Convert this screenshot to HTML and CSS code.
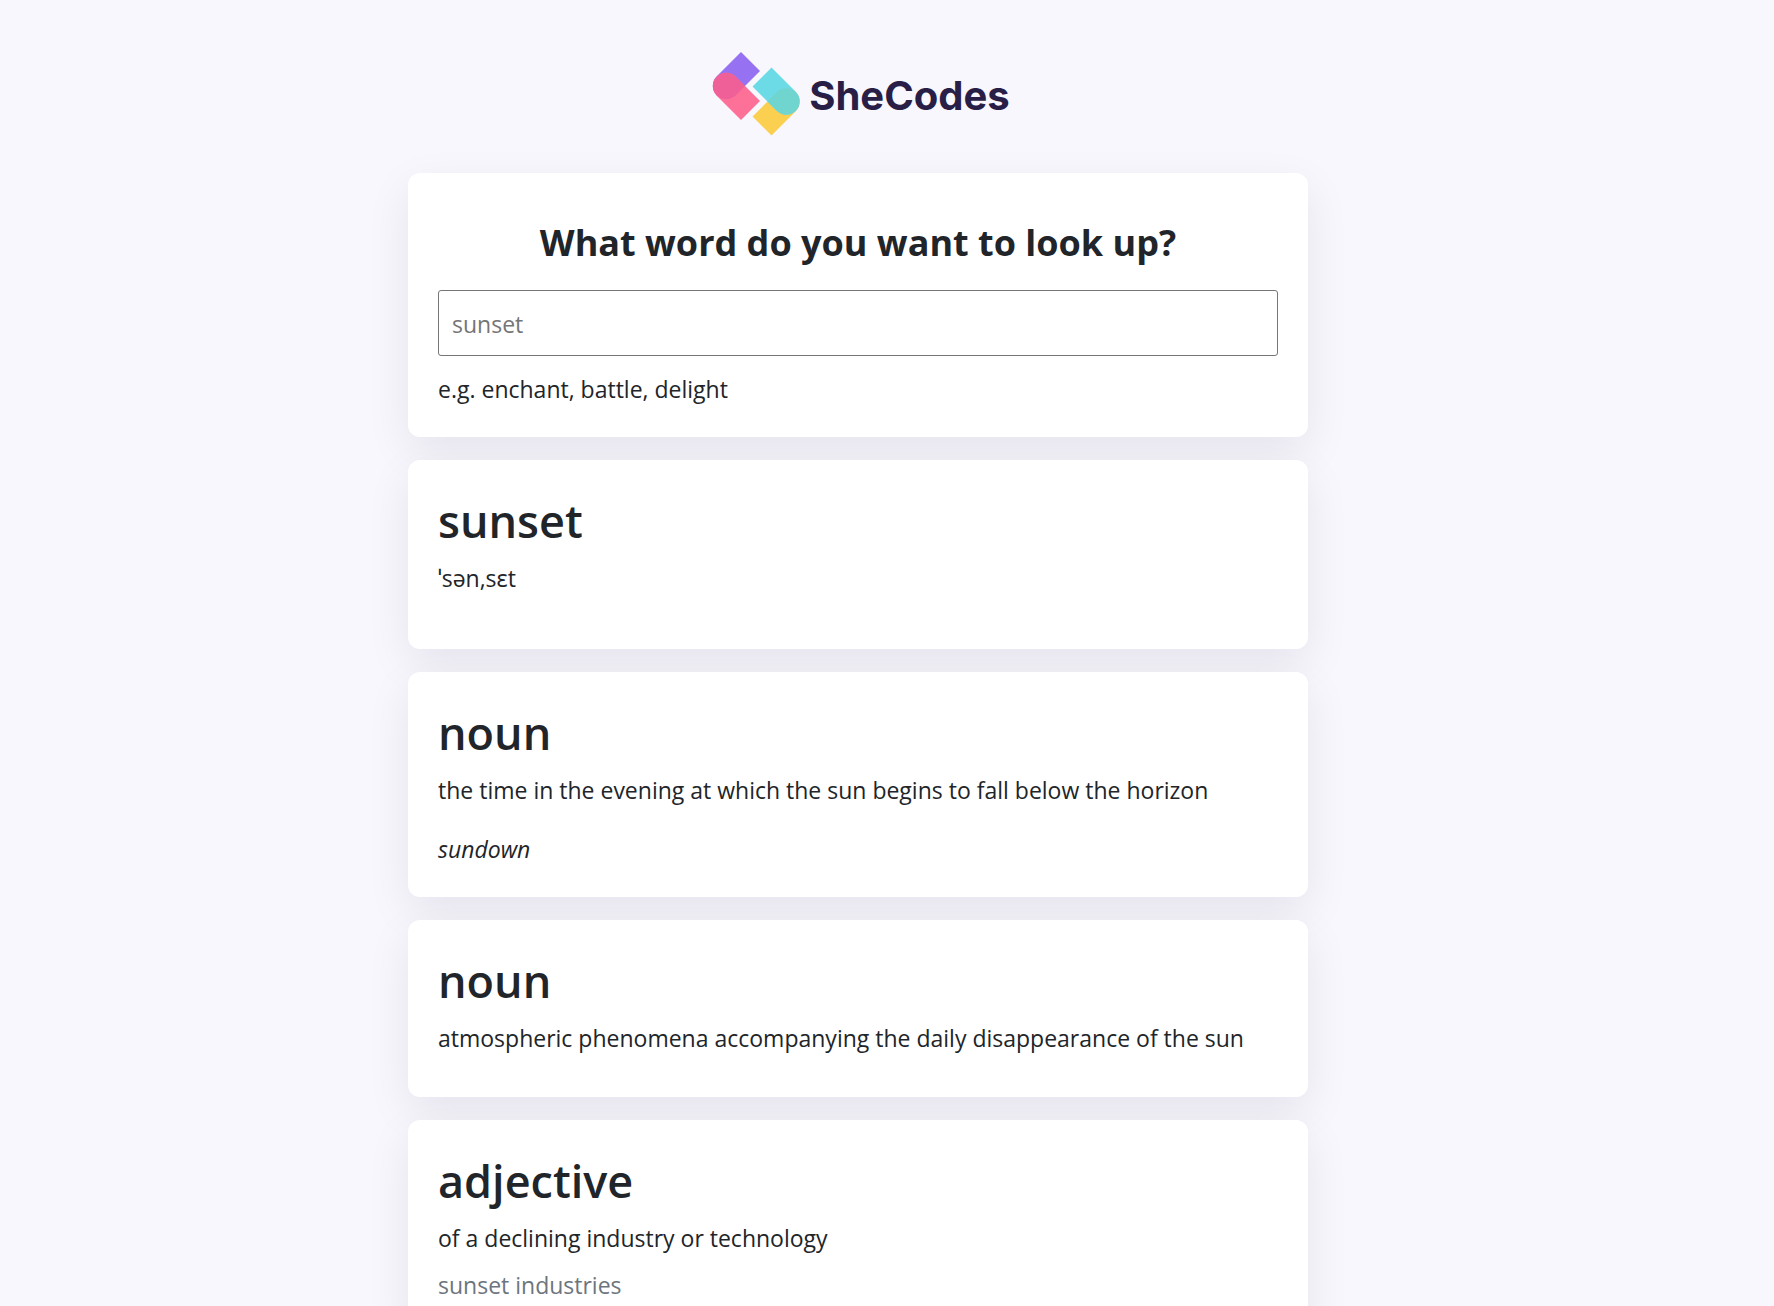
FILE: index.html
```html
<!DOCTYPE html>
<html lang="en">
<head>
  <meta charset="utf-8">
  <meta name="viewport" content="width=device-width, initial-scale=1">
  <title>Dictionary - SheCodes</title>
  <link rel="stylesheet" href="styles.css">
</head>
<body>
  <div class="container">
    <header class="logo">
      <svg class="logo-mark" viewBox="0 0 88 84" aria-hidden="true">
        <defs>
          <clipPath id="clip-pink"><path d="M48 49 29 68 4.500 43.500A13.440 13.440 0 0 1 23.500 24.500Z"/></clipPath>
          <clipPath id="clip-cyan"><path d="M59.500 15.500 40.500 34.500 65 59A13.440 13.440 0 0 0 84 40Z"/></clipPath>
        </defs>
        <path fill="#9672f2" d="M29 0 48 19 23.500 43.500A13.440 13.440 0 0 1 4.500 24.500Z"/>
        <path fill="#fd7199" d="M48 49 29 68 4.500 43.500A13.440 13.440 0 0 1 23.500 24.500Z"/>
        <path fill="#ef5f98" clip-path="url(#clip-pink)" d="M29 0 48 19 23.500 43.500A13.440 13.440 0 0 1 4.500 24.500Z"/>
        <path fill="#fbcf50" d="M40.500 64.500 59.500 83.500 84 59A13.440 13.440 0 0 0 65 40Z"/>
        <path fill="#6cdbe6" d="M59.500 15.500 40.500 34.500 65 59A13.440 13.440 0 0 0 84 40Z"/>
        <path fill="#70d5cf" clip-path="url(#clip-cyan)" d="M40.500 64.500 59.500 83.500 84 59A13.440 13.440 0 0 0 65 40Z"/>
      </svg>
      <span class="logo-name">SheCodes</span>
    </header>
    <main class="dictionary">
      <section class="card search">
        <form>
          <h1 class="question"><label for="keyword">What word do you want to look up?</label></h1>
          <input class="search-input" id="keyword" type="search" placeholder="sunset">
        </form>
        <p class="hint">e.g. enchant, battle, delight</p>
      </section>
      <section class="card word">
        <h2 class="title">sunset</h2>
        <p class="phonetic">ˈsən,sɛt</p>
      </section>
      <section class="card">
        <h2 class="title">noun</h2>
        <p class="definition">the time in the evening at which the sun begins to fall below the horizon</p>
        <ul class="synonyms">
          <li>sundown</li>
        </ul>
      </section>
      <section class="card">
        <h2 class="title">noun</h2>
        <p class="definition">atmospheric phenomena accompanying the daily disappearance of the sun</p>
      </section>
      <section class="card">
        <h2 class="title">adjective</h2>
        <p class="definition">of a declining industry or technology</p>
        <p class="example">sunset industries</p>
      </section>
    </main>
  </div>
</body>
</html>
```
FILE: styles.css
```css
* {
  box-sizing: border-box;
}

body {
  margin: 0;
  padding: 0 58px 0 0;
  background: #f8f7fe;
  color: #212529;
  font-family: "Segoe UI", "Open Sans", "Noto Sans", sans-serif;
  font-size: 23px;
  line-height: 36px;
}

h1, h2, p, ul {
  margin: 0;
}

.container {
  max-width: 900px;
  margin: 0 auto;
}

.logo {
  display: flex;
  justify-content: center;
  align-items: center;
  gap: 9px;
  padding: 52px 0 37px 6px;
}

.logo-mark {
  width: 88px;
  height: 84px;
}

.logo-name {
  padding-top: 3px;
  color: #281e46;
  font-family: Inter, sans-serif;
  font-size: 40px;
  font-weight: 700;
  line-height: 48px;
}

.dictionary {
  display: flex;
  flex-direction: column;
  gap: 23px;
}

.card {
  padding: 30px;
  border-radius: 12px;
  background: #fff;
  box-shadow: 0 15px 45px rgba(8, 8, 20, 0.08);
}

.question {
  padding-top: 17px;
  font-size: 36px;
  font-weight: 700;
  line-height: 46px;
  text-align: center;
}

.search-input {
  display: block;
  width: 100%;
  height: 66px;
  margin: 24px 0 15px;
  padding: 2px 13px 0;
  border: 1px solid #767676;
  border-radius: 3px;
  background: #fff;
  color: inherit;
  font: inherit;
  appearance: none;
}

.search-input::placeholder {
  color: #757575;
}

.title {
  margin-bottom: 8px;
  font-size: 45px;
  font-weight: 600;
  line-height: 62px;
}

.phonetic {
  margin-bottom: 23px;
}

.definition {
  margin-bottom: 11px;
}

.synonyms {
  padding: 12px 0 0;
  list-style: none;
  font-style: italic;
}

.example {
  color: #6c757d;
}
```
